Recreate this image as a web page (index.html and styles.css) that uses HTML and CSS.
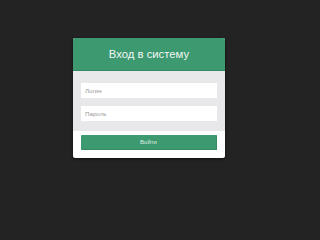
FILE: index.html
```html
<!DOCTYPE html>
<html lang="ru">
<head>
<meta charset="utf-8">
<title>Вход в систему</title>
<link rel="stylesheet" href="styles.css">
</head>
<body>
<div class="card">
  <div class="card-header">Вход в систему</div>
  <div class="card-body">
    <div class="field">Логин</div>
    <div class="field">Пароль</div>
  </div>
  <div class="card-footer">
    <div class="btn">Войти</div>
  </div>
</div>
</body>
</html>
```
FILE: styles.css
```css
html, body {
  margin: 0;
  padding: 0;
  background: #232323;
  height: 100%;
}
body {
  padding: 38px 0 0 73px;
  box-sizing: border-box;
  font-family: "Liberation Sans", Arial, sans-serif;
}
.card {
  width: 152px;
  background: #fff;
  border-radius: 2px;
  box-shadow: 0 1px 3px rgba(0,0,0,0.6);
  overflow: hidden;
}
.card-header {
  height: 32px;
  background: #3d9970;
  border-bottom: 1px solid #358a63;
  color: #f2f7f4;
  font-size: 11.3px;
  line-height: 33px;
  text-align: center;
}
.card-body {
  background: #e8e8ea;
  padding: 12px 8px 10px;
  display: flex;
  flex-direction: column;
  gap: 8px;
}
.field {
  height: 15px;
  background: #fff;
  font-size: 6.2px;
  line-height: 15px;
  color: #9a9a9a;
  padding-left: 4px;
}
.card-footer {
  padding: 4px 8px 8px;
}
.btn {
  height: 14px;
  background: #3d9970;
  border: 1px solid #358a63;
  border-width: 0 1px 1px 0;
  border-radius: 1px;
  color: #dff0e6;
  font-size: 6px;
  line-height: 14px;
  text-align: center;
}
```
